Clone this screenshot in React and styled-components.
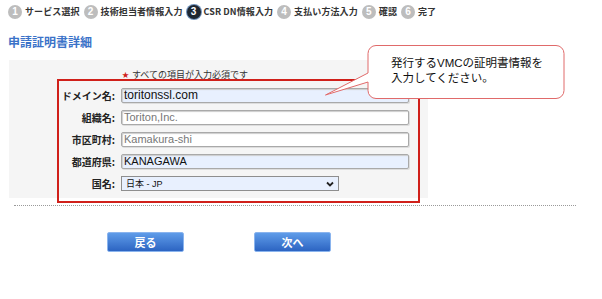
import React from 'react';
import styled, { createGlobalStyle } from 'styled-components';

const STEPS = [
  { no: 1, label: 'サービス選択' },
  { no: 2, label: '技術担当者情報入力' },
  { no: 3, label: 'CSR DN情報入力', active: true },
  { no: 4, label: '支払い方法入力' },
  { no: 5, label: '確認' },
  { no: 6, label: '完了' },
];

const FIELDS = [
  { label: 'ドメイン名:', value: 'toritonssl.com', filled: true },
  { label: '組織名:', value: 'Toriton,Inc.' },
  { label: '市区町村:', value: 'Kamakura-shi' },
  { label: '都道府県:', value: 'KANAGAWA', filled: true },
];

const GlobalStyle = createGlobalStyle`
  body {
    margin: 0;
    background: #fff;
    font-family: "Liberation Sans", "Noto Sans CJK JP", sans-serif;
    color: #222;
  }
`;

const Page = styled.div`
  position: relative;
  width: 602px;
  height: 299px;
  overflow: hidden;
`;

const StepBar = styled.ol`
  display: flex;
  align-items: center;
  gap: 4px;
  list-style: none;
  margin: 0;
  padding: 4px 0 0 8px;
  height: 15px;
`;

const Step = styled.li`
  display: flex;
  align-items: center;
  gap: 3px;
  font-size: 9px;
  font-weight: bold;
  color: #333;
  letter-spacing: 0.1px;
  font-family: "Noto Sans CJK JP", sans-serif;
`;

const StepNo = styled.span`
  display: inline-flex;
  align-items: center;
  justify-content: center;
  width: 14px;
  height: 14px;
  border-radius: 50%;
  font-family: "Liberation Sans", sans-serif;
  font-size: 10px;
  font-weight: bold;
  color: #fff;
  background: ${({ $active }) => ($active ? '#1e2630' : '#bdbdbd')};
  box-shadow: ${({ $active }) => ($active ? '0 0 0 1px #6d8fb8' : 'none')};
  box-sizing: border-box;
`;

const Title = styled.h2`
  margin: 16px 0 0 8px;
  height: 14px;
  font-size: 12px;
  line-height: 14px;
  font-weight: bold;
  color: #3a72c8;
  font-family: "Noto Sans CJK JP", sans-serif;
`;

const Panel = styled.section`
  position: relative;
  margin: 11px 0 0 9px;
  width: 419px;
  box-sizing: border-box;
  padding: 8px 0 7px;
  background: #f5f5f5;
`;

const Note = styled.p`
  margin: 0 0 8px 113px;
  height: 12px;
  font-size: 9px;
  line-height: 12px;
  color: #333;
  font-family: "Noto Sans CJK JP", sans-serif;

  span {
    color: #d0201a;
    font-size: 7px;
    margin-right: 3px;
    vertical-align: 1px;
  }
`;

const Form = styled.div`
  display: grid;
  grid-template-columns: 106px 288px;
  column-gap: 6px;
  row-gap: 7px;
  align-items: center;
`;

const Label = styled.label`
  text-align: right;
  font-size: 10px;
  font-weight: bold;
  color: #222;
  font-family: "Noto Sans CJK JP", sans-serif;
  line-height: 15px;
`;

const Field = styled.div`
  height: 15px;
  box-sizing: border-box;
  border: 1px solid #a9a9a9;
  border-radius: 2px;
  box-shadow: inset 1px 1px 1px #ccc, 1px 1px 0 #ddd;
  background: ${({ $filled }) => ($filled ? '#e8f0fe' : '#fff')};
  color: ${({ $filled }) => ($filled ? '#111' : '#777')};
  font-size: ${({ $big }) => ($big ? '12px' : '11px')};
  line-height: 13px;
  padding-left: 2px;
  white-space: nowrap;
`;

const Select = styled.div`
  display: flex;
  align-items: center;
  justify-content: space-between;
  width: 218px;
  height: 15px;
  box-sizing: border-box;
  border: 1px solid #8e8e8e;
  background: #e8f0fe;
  font-size: 9px;
  color: #111;
  padding: 0 4px;
  font-family: "Liberation Sans", "Noto Sans CJK JP", sans-serif;
`;

const RedFrame = styled.div`
  position: absolute;
  left: 48px;
  top: 19px;
  width: 363px;
  height: 124px;
  box-sizing: border-box;
  border: 2px solid #d0201a;
  pointer-events: none;
`;

const Divider = styled.hr`
  margin: 7px 0 0 14px;
  width: 562px;
  border: none;
  border-top: 1px dotted #9a9a9a;
`;

const Buttons = styled.div`
  display: flex;
  gap: 70px;
  margin: 26px 0 0 107px;
`;

const Button = styled.button`
  width: 77px;
  height: 20px;
  border: 1px solid #8ab4ee;
  border-radius: 2px;
  background: linear-gradient(#5f9ce9, #2c64c2);
  color: #fff;
  font-size: 11px;
  font-weight: bold;
  font-family: "Noto Sans CJK JP", sans-serif;
  padding: 0;
`;

const Callout = styled.div`
  position: absolute;
  left: 325px;
  top: 44px;
  width: 241px;
  height: 56px;
`;

const CalloutText = styled.p`
  position: absolute;
  left: 66px;
  top: 12px;
  margin: 0;
  font-size: 11.5px;
  line-height: 15px;
  color: #111;
  font-family: "Liberation Sans", "Noto Sans CJK JP", sans-serif;
`;

const App = () => {
  return (
    <Page>
      <GlobalStyle />
      <StepBar>
        {STEPS.map((s) => (
          <Step key={s.no}>
            <StepNo $active={s.active}>{s.no}</StepNo>
            {s.label}
          </Step>
        ))}
      </StepBar>
      <Title>申請証明書詳細</Title>
      <Panel>
        <Note>
          <span>★</span>すべての項目が入力必須です
        </Note>
        <Form>
          {FIELDS.map((f) => (
            <React.Fragment key={f.label}>
              <Label>{f.label}</Label>
              <Field $filled={f.filled} $big={f.label === 'ドメイン名:'}>
                {f.value}
              </Field>
            </React.Fragment>
          ))}
          <Label>国名:</Label>
          <Select>
            <span>日本 - JP</span>
            <svg width="8" height="6" viewBox="0 0 8 6">
              <path d="M1 1.5 L4 4.5 L7 1.5" stroke="#222" strokeWidth="1.8" fill="none" />
            </svg>
          </Select>
        </Form>
        <RedFrame />
      </Panel>
      <Divider />
      <Buttons>
        <Button>戻る</Button>
        <Button>次へ</Button>
      </Buttons>
      <Callout>
        <svg width="241" height="56" viewBox="0 0 241 56">
          <path
            d="M51 1.5 H231 A8 8 0 0 1 239 9.5 V46.5 A8 8 0 0 1 231 54.5 H51 A8 8 0 0 1 43 46.5 V38 L0.5 51 L43 29 V9.5 A8 8 0 0 1 51 1.5 Z"
            fill="#fff"
            stroke="#e06a6a"
            strokeWidth="1"
          />
        </svg>
        <CalloutText>
          発行するVMCの証明書情報を
          <br />
          入力してください。
        </CalloutText>
      </Callout>
    </Page>
  );
};

export default App;
